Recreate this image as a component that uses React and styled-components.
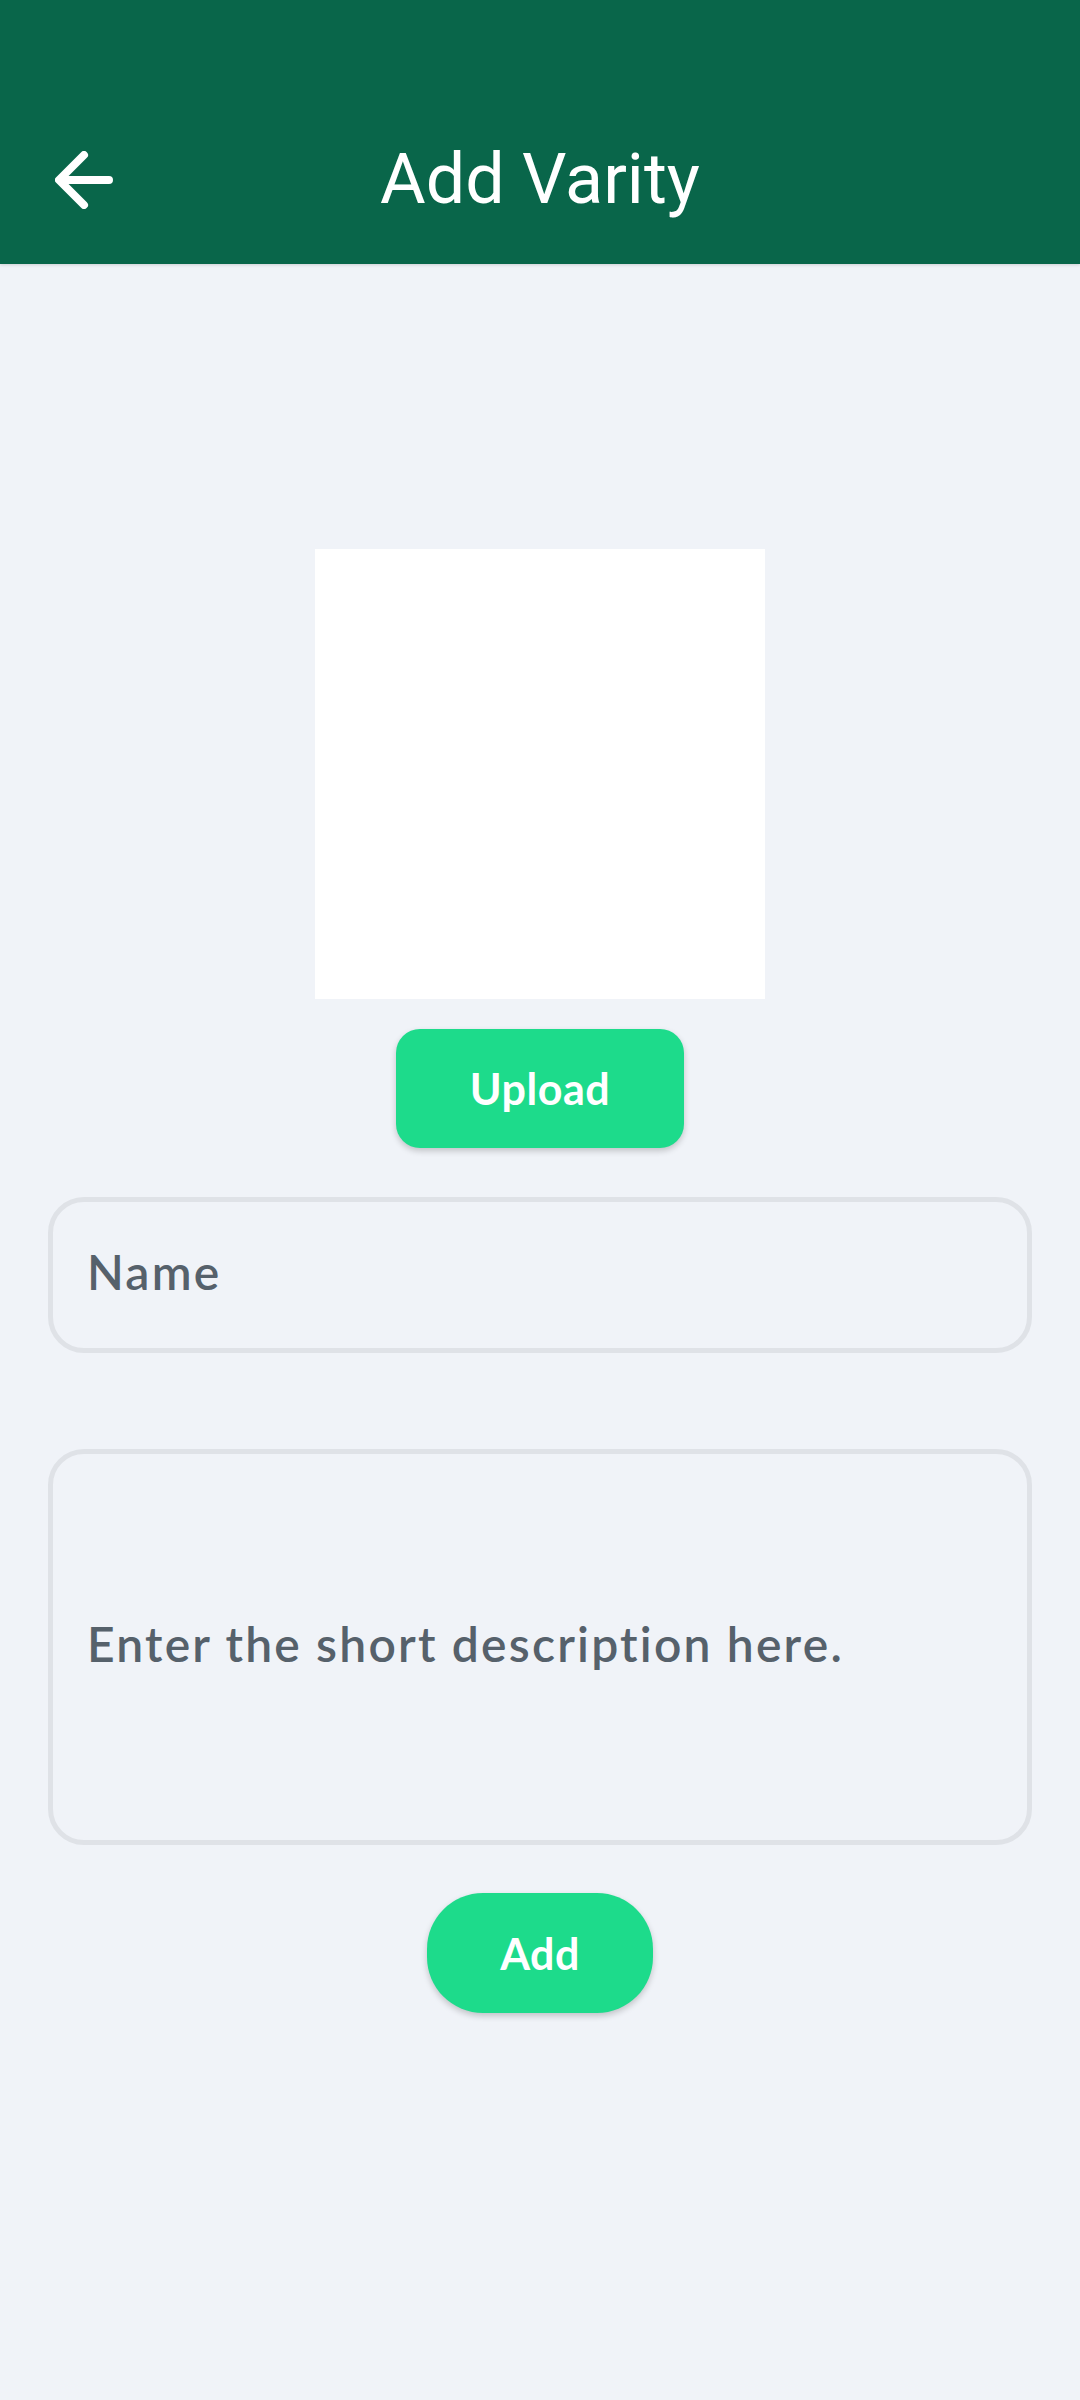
import React from 'react';
import styled, { createGlobalStyle } from 'styled-components';

const GlobalStyle = createGlobalStyle`
  html, body {
    margin: 0;
    padding: 0;
    background: #f0f3f8;
  }
  * {
    box-sizing: border-box;
  }
`;

const Page = styled.div`
  min-height: 100vh;
  background: #f0f3f8;
  display: flex;
  flex-direction: column;
`;

const Header = styled.header`
  height: 264px;
  background: #09664a;
  display: flex;
  align-items: flex-end;
  padding: 0 0 48px 55px;
  position: relative;
  box-shadow: 0 1px 3px rgba(0, 0, 0, 0.15);
`;

const BackButton = styled.button`
  width: 58px;
  height: 58px;
  padding: 0;
  border: none;
  background: none;
  display: flex;
  align-items: center;
  justify-content: center;
  cursor: pointer;
  margin-bottom: 7px;
`;

const Title = styled.h1`
  position: absolute;
  left: 0;
  right: 0;
  bottom: 50px;
  margin: 0;
  text-align: center;
  font-family: Roboto, "Liberation Sans", sans-serif;
  font-weight: 400;
  font-size: 70px;
  line-height: 70px;
  color: #ffffff;
  pointer-events: none;
`;

const Content = styled.main`
  display: flex;
  flex-direction: column;
  align-items: center;
  padding: 285px 48px 0;
`;

const ImageBox = styled.div`
  width: 450px;
  height: 450px;
  background: #ffffff;
`;

const ActionButton = styled.button`
  width: ${p => p.$width}px;
  height: ${p => p.$height}px;
  margin-top: ${p => p.$top}px;
  border: none;
  border-radius: ${p => p.$radius}px;
  background: #1ddb8b;
  color: #ffffff;
  font-family: Lato, "Noto Sans", sans-serif;
  font-weight: 700;
  font-size: 43px;
  letter-spacing: 0.5px;
  box-shadow: 0 3px 6px rgba(0, 0, 0, 0.2);
  cursor: pointer;
`;

const Field = styled.div`
  width: 100%;
  height: ${p => p.$height}px;
  margin-top: ${p => p.$top}px;
  border: 5px solid #dfe2e7;
  border-radius: 36px;
  display: flex;
  align-items: center;
  padding: 0 34px 8px;
`;

const Placeholder = styled.span`
  font-family: Lato, "Noto Sans", sans-serif;
  font-weight: 600;
  font-size: 48px;
  letter-spacing: 2.2px;
  color: #56616b;
`;

const BackArrow = () => (
  <svg width="58" height="58" viewBox="0 0 58 58" fill="none">
    <path
      d="M54 29H6M29 4L4 29L29 54"
      stroke="#ffffff"
      strokeWidth="8"
      strokeLinecap="round"
      strokeLinejoin="round"
    />
  </svg>
);

const App = () => {
  return (
    <Page>
      <GlobalStyle />
      <Header>
        <BackButton aria-label="Back">
          <BackArrow />
        </BackButton>
        <Title>Add Varity</Title>
      </Header>
      <Content>
        <ImageBox />
        <ActionButton $width={288} $height={119} $top={30} $radius={24}>
          Upload
        </ActionButton>
        <Field $height={156} $top={49}>
          <Placeholder>Name</Placeholder>
        </Field>
        <Field $height={396} $top={96}>
          <Placeholder>Enter the short description here.</Placeholder>
        </Field>
        <ActionButton $width={226} $height={120} $top={48} $radius={56}>
          Add
        </ActionButton>
      </Content>
    </Page>
  );
};

export default App;
